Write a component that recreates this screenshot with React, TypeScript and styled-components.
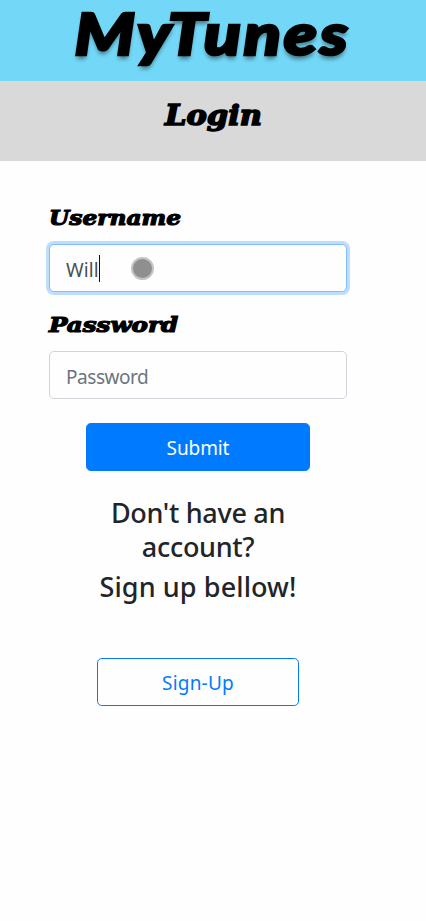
import React from "react";
import styled, { createGlobalStyle } from "styled-components";

const GlobalStyle = createGlobalStyle`
  *, *::before, *::after { box-sizing: border-box; }
  body {
    margin: 0;
    min-height: 921px;
    background: #fefefe;
    color: #212529;
    font-family: "Noto Sans", "Open Sans", sans-serif;
    overflow: hidden;
  }
  h1, h2, h3, p { margin: 0; }
`;

const Header = styled.header`
  height: 81px;
  background: #73d8f7;
  display: flex;
  justify-content: center;
`;

const Brand = styled.h1`
  font: italic 900 57px/67px Lato, sans-serif;
  letter-spacing: 2.4px;
  color: #000;
  white-space: nowrap;
  -webkit-text-stroke: 2.6px #000;
  text-shadow: 0 4px 4px rgba(0, 0, 0, 0.45);
  transform: scaleX(1.195);
`;

const TitleBar = styled.div`
  height: 80px;
  background: #d9d9d9;
  display: flex;
  justify-content: center;
`;

const PageTitle = styled.h2`
  font: italic 700 28px/69px "DejaVu Serif", serif;
  color: #000;
  -webkit-text-stroke: 1.6px #000;
  transform: scaleX(1.09);
`;

const Main = styled.main`
  width: 298px;
  margin: 41px 0 0 49px;
  display: flex;
  flex-direction: column;
  align-items: center;
`;

const Field = styled.div`
  width: 100%;
  height: 107px;
  display: flex;
  flex-direction: column;
`;

const Label = styled.label<{ $stretch: number }>`
  height: 42px;
  font: italic 700 21px/32px "DejaVu Serif", serif;
  color: #000;
  white-space: nowrap;
  -webkit-text-stroke: 1.2px #000;
  transform: scaleX(${(p) => p.$stretch});
  transform-origin: left center;
`;

const InputBox = styled.div<{ $focused?: boolean }>`
  position: relative;
  height: 48px;
  padding: 3px 16px 0;
  display: flex;
  align-items: center;
  border: 1px solid ${(p) => (p.$focused ? "#80bdff" : "#ced4da")};
  border-radius: 4.8px;
  background: #fefefe;
  box-shadow: ${(p) => (p.$focused ? "0 0 0 3px #bfdeff" : "none")};
  color: ${(p) => (p.$focused ? "#495057" : "#6c757d")};
  font-size: 19px;
  letter-spacing: ${(p) => (p.$focused ? "0.1px" : "-0.45px")};
`;

const Caret = styled.span`
  width: 1px;
  height: 27px;
  margin-top: -2px;
  background: #111;
`;

const TouchPoint = styled.span`
  position: absolute;
  left: 81px;
  top: 12px;
  width: 23px;
  height: 23px;
  border: 2px solid #c4c4c4;
  border-radius: 50%;
  background: #8f8f8f;
`;

const Button = styled.button<{ $outline?: boolean }>`
  width: ${(p) => (p.$outline ? "202px" : "224px")};
  height: 48px;
  padding: 2px 0 0;
  border: 1px solid #007bff;
  border-radius: 4.8px;
  background: ${(p) => (p.$outline ? "transparent" : "#007bff")};
  color: ${(p) => (p.$outline ? "#007bff" : "#fff")};
  font: 400 19px/28px "Noto Sans", sans-serif;
  letter-spacing: ${(p) => (p.$outline ? "0.2px" : "-0.1px")};
`;

const Prompt = styled.div`
  width: 224px;
  margin: 25px 0 54px;
  display: flex;
  flex-direction: column;
  gap: 7px;
  text-align: center;
`;

const PromptLine = styled.h3<{ $spacing: string }>`
  font-size: 27px;
  font-weight: 500;
  line-height: 33.5px;
  letter-spacing: ${(p) => p.$spacing};
`;

const Actions = styled.div`
  width: 100%;
  padding-top: 7px;
  display: flex;
  flex-direction: column;
  align-items: center;
`;

export default function App() {
  return (
    <>
      <GlobalStyle />
      <Header>
        <Brand>MyTunes</Brand>
      </Header>
      <TitleBar>
        <PageTitle>Login</PageTitle>
      </TitleBar>
      <Main>
        <Field>
          <Label $stretch={1.11}>Username</Label>
          <InputBox $focused>
            Will
            <Caret />
            <TouchPoint />
          </InputBox>
        </Field>
        <Field>
          <Label $stretch={1.17}>Password</Label>
          <InputBox>Password</InputBox>
        </Field>
        <Actions>
          <Button>Submit</Button>
          <Prompt>
            <PromptLine $spacing="-0.3px">Don't have an account?</PromptLine>
            <PromptLine $spacing="0.1px">Sign up bellow!</PromptLine>
          </Prompt>
          <Button $outline>Sign-Up</Button>
        </Actions>
      </Main>
    </>
  );
}
